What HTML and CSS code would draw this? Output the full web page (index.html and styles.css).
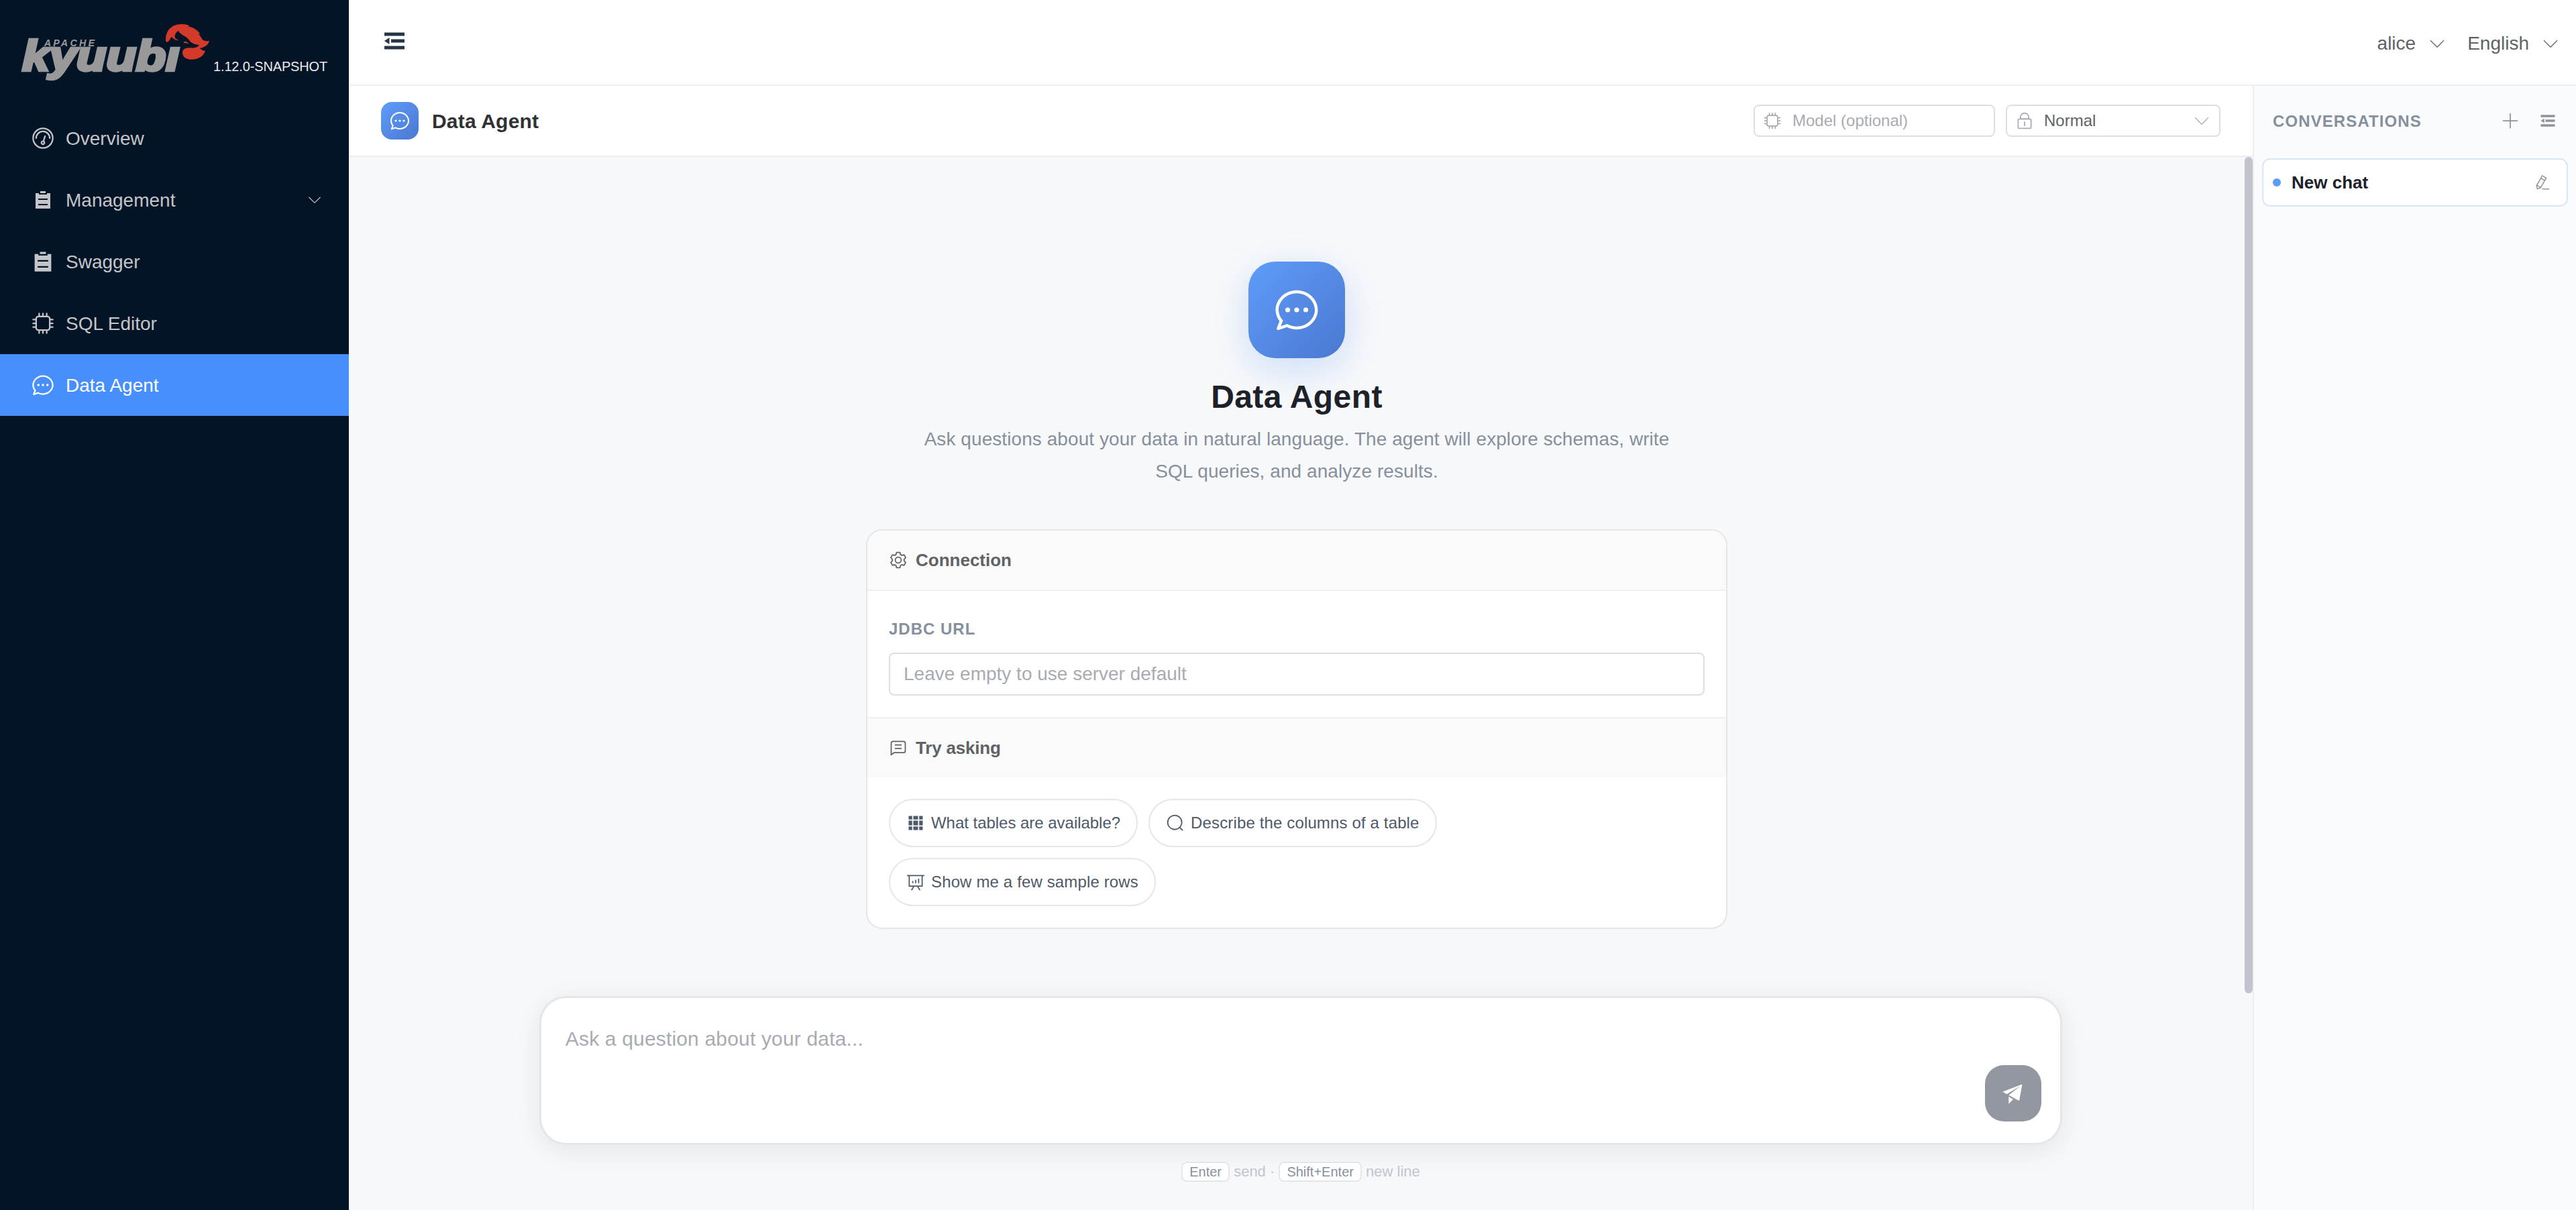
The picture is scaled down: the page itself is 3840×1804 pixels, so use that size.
FILE: index.html
```html
<!DOCTYPE html>
<html lang="en">
<head>
    <meta charset="UTF-8">
    <meta name="viewport" content="width=device-width, initial-scale=1.0">
    <title>Apache Kyuubi Dashboard</title>

    <link rel="stylesheet" href="styles.css">
</head>
<body>

    <!-- shared icons -->
    <svg class="sprite" xmlns="http://www.w3.org/2000/svg">
        <symbol id="i-odometer" viewBox="0 0 1024 1024">
            <path d="M512 896a384 384 0 1 0 0-768 384 384 0 0 0 0 768m0 64a448 448 0 1 1 0-896 448 448 0 0 1 0 896"/>
            <path d="M192 512a320 320 0 1 1 640 0 32 32 0 1 1-64 0 256 256 0 1 0-512 0 32 32 0 0 1-64 0"/>
            <path d="M570.432 627.84A96 96 0 1 1 509.568 608l60.992-187.776A32 32 0 1 1 631.424 440l-60.992 187.776zM502.08 734.464a32 32 0 1 0 19.84-60.928 32 32 0 0 0-19.84 60.928"/>
        </symbol>
        <symbol id="i-list" viewBox="0 0 1024 1024">
            <path d="M704 192h160v736H160V192h160v64h384zM288 512h448v-64H288zm0 256h448v-64H288zm96-576V96h256v96z"/>
        </symbol>
        <symbol id="i-cpu" viewBox="0 0 1024 1024">
            <path d="M320 256a64 64 0 0 0-64 64v384a64 64 0 0 0 64 64h384a64 64 0 0 0 64-64V320a64 64 0 0 0-64-64zm0-64h384a128 128 0 0 1 128 128v384a128 128 0 0 1-128 128H320a128 128 0 0 1-128-128V320a128 128 0 0 1 128-128"/>
            <path d="M480 224V96a32 32 0 0 1 64 0v128zM640 224V96a32 32 0 0 1 64 0v128zM320 224V96a32 32 0 0 1 64 0v128zM480 800v128a32 32 0 0 0 64 0V800zM640 800v128a32 32 0 0 0 64 0V800zM320 800v128a32 32 0 0 0 64 0V800zM224 480H96a32 32 0 0 0 0 64h128zM224 640H96a32 32 0 0 0 0 64h128zM224 320H96a32 32 0 0 0 0 64h128zM800 480h128a32 32 0 0 1 0 64H800zM800 640h128a32 32 0 0 1 0 64H800zM800 320h128a32 32 0 0 1 0 64H800z"/>
        </symbol>
        <symbol id="i-chat" viewBox="0 0 1024 1024">
            <path d="m174.72 855.68 135.296-45.12 23.68 11.84C388.096 849.536 448.576 864 512 864c211.84 0 384-166.784 384-352S723.84 160 512 160 128 326.784 128 512c0 69.12 24.96 139.264 70.848 199.232l22.08 28.8-46.272 115.584zm-45.248 82.56A32 32 0 0 1 89.6 896l58.368-145.92C94.72 680.32 64 596.864 64 512 64 299.904 256 96 512 96s448 203.904 448 416-192 416-448 416a461.056 461.056 0 0 1-206.912-48.384l-175.616 58.56z"/>
            <path d="M512 563.2a51.2 51.2 0 1 1 0-102.4 51.2 51.2 0 0 1 0 102.4m192 0a51.2 51.2 0 1 1 0-102.4 51.2 51.2 0 0 1 0 102.4m-384 0a51.2 51.2 0 1 1 0-102.4 51.2 51.2 0 0 1 0 102.4"/>
        </symbol>
        <symbol id="i-arrow" viewBox="0 0 1024 1024">
            <path d="M160 352 512 700 864 352" fill="none" stroke="currentColor" stroke-width="50" stroke-linecap="round" stroke-linejoin="round"/>
        </symbol>
        <symbol id="i-fold" viewBox="0 0 1024 1024">
            <path d="M896 192H128v128h768zm0 256H384v128h512zm0 256H128v128h768zM320 384 128 512l192 128z"/>
        </symbol>
        <symbol id="i-lock" viewBox="0 0 1024 1024">
            <path d="M224 448a32 32 0 0 0-32 32v384a32 32 0 0 0 32 32h576a32 32 0 0 0 32-32V480a32 32 0 0 0-32-32zm0-64h576a96 96 0 0 1 96 96v384a96 96 0 0 1-96 96H224a96 96 0 0 1-96-96V480a96 96 0 0 1 96-96"/>
            <path d="M512 544a32 32 0 0 1 32 32v192a32 32 0 1 1-64 0V576a32 32 0 0 1 32-32m192-160v-64a192 192 0 1 0-384 0v64zM512 64a256 256 0 0 1 256 256v128H256V320A256 256 0 0 1 512 64"/>
        </symbol>
        <symbol id="i-plus" viewBox="0 0 1024 1024">
            <path d="M480 480V128a32 32 0 0 1 64 0v352h352a32 32 0 1 1 0 64H544v352a32 32 0 1 1-64 0V544H128a32 32 0 0 1 0-64z"/>
        </symbol>
        <symbol id="i-edit" viewBox="0 0 1024 1024">
            <path d="m199.04 672.64 193.984 112 224-387.968-193.92-112-224 388.032zm-23.872 60.16 32.896 148.288 144.896-45.696zM455.04 229.248l193.92 112 56.704-98.112-193.984-112zM104.32 708.8l384-665.024 304.768 175.936L409.152 884.8h.064l-248.448 78.336zm384 254.272v-64h448v64z"/>
        </symbol>
        <symbol id="i-setting" viewBox="0 0 1024 1024">
            <path d="M600.704 64a32 32 0 0 1 30.464 22.208l35.2 109.376c14.784 7.232 28.928 15.36 42.432 24.512l112.384-24.192a32 32 0 0 1 34.432 15.36L944.32 364.8a32 32 0 0 1-4.032 37.504l-77.12 85.12a357.12 357.12 0 0 1 0 49.024l77.12 85.248a32 32 0 0 1 4.032 37.504l-88.704 153.6a32 32 0 0 1-34.432 15.296L708.8 803.904c-13.44 9.088-27.648 17.28-42.368 24.512l-35.264 109.376A32 32 0 0 1 600.704 960H423.296a32 32 0 0 1-30.464-22.208L357.696 828.48a351.616 351.616 0 0 1-42.56-24.64l-112.32 24.256a32 32 0 0 1-34.432-15.36L79.68 659.2a32 32 0 0 1 4.032-37.504l77.12-85.248a357.12 357.12 0 0 1 0-48.896l-77.12-85.248A32 32 0 0 1 79.68 364.8l88.704-153.6a32 32 0 0 1 34.432-15.296l112.32 24.256c13.568-9.152 27.776-17.408 42.56-24.64l35.2-109.312A32 32 0 0 1 423.232 64H600.64zm-23.424 64H446.72l-36.352 113.088-24.512 11.968a294.113 294.113 0 0 0-34.816 20.096l-22.656 15.36-116.224-25.088-65.28 113.152 79.68 88.192-1.92 27.136a293.12 293.12 0 0 0 0 40.192l1.92 27.136-79.808 88.192 65.344 113.152 116.224-25.024 22.656 15.296a294.113 294.113 0 0 0 34.816 20.096l24.512 11.968L446.72 896h130.688l36.48-113.152 24.448-11.904a288.282 288.282 0 0 0 34.752-20.096l22.592-15.296 116.288 25.024 65.28-113.152-79.744-88.192 1.92-27.136a293.12 293.12 0 0 0 0-40.256l-1.92-27.136 79.808-88.128-65.344-113.152-116.288 24.96-22.592-15.232a287.616 287.616 0 0 0-34.752-20.096l-24.448-11.904L577.344 128zM512 320a192 192 0 1 1 0 384 192 192 0 0 1 0-384m0 64a128 128 0 1 0 0 256 128 128 0 0 0 0-256"/>
        </symbol>
        <symbol id="i-lines" viewBox="0 0 1024 1024">
            <path d="M160 826.88 273.536 736H800a64 64 0 0 0 64-64V256a64 64 0 0 0-64-64H224a64 64 0 0 0-64 64zM296 800 147.968 918.4A32 32 0 0 1 96 893.44V256a128 128 0 0 1 128-128h576a128 128 0 0 1 128 128v416a128 128 0 0 1-128 128z"/>
            <path d="M352 512h320q32 0 32 32t-32 32H352q-32 0-32-32t32-32m0-192h320q32 0 32 32t-32 32H352q-32 0-32-32t32-32"/>
        </symbol>
        <symbol id="i-grid" viewBox="0 0 1024 1024">
            <path d="M640 384v256H384V384zm64 0h192v256H704zm-64 512H384V704h256zm64 0V704h192v192zm-64-768v192H384V128zm64 0h192v192H704zM320 384v256H128V384zm0 512H128V704h192zm0-768v192H128V128z"/>
        </symbol>
        <symbol id="i-search" viewBox="0 0 1024 1024">
            <path d="m795.904 750.72 124.992 124.928a32 32 0 0 1-45.248 45.248L750.656 795.904a416 416 0 1 1 45.248-45.248zM480 832a352 352 0 1 0 0-704 352 352 0 0 0 0 704"/>
        </symbol>
        <symbol id="i-analysis" viewBox="0 0 1024 1024">
            <path d="m665.216 768 110.848 192h-73.856L591.36 768H433.024L322.176 960H248.32l110.848-192H160a32 32 0 0 1-32-32V192H64a32 32 0 0 1 0-64h896a32 32 0 1 1 0 64h-64v544a32 32 0 0 1-32 32zM832 192H192v512h640zM352 448a32 32 0 0 1 32 32v64a32 32 0 0 1-64 0v-64a32 32 0 0 1 32-32m160-64a32 32 0 0 1 32 32v128a32 32 0 0 1-64 0V416a32 32 0 0 1 32-32m160-64a32 32 0 0 1 32 32v192a32 32 0 1 1-64 0V352a32 32 0 0 1 32-32"/>
        </symbol>
        <symbol id="i-send" viewBox="0 0 1024 1024">
            <path d="m64 448 832-320-128 704-446.08-243.328L832 192 242.816 545.472zm256 512V657.024L512 768z"/>
        </symbol>
    </svg>

    <aside class="sidebar">
        <div class="brand">
            <svg class="logo" viewBox="0 0 930 330">
                <text class="logo-name" x="40" y="242" textLength="702" lengthAdjust="spacingAndGlyphs">kyuubı</text>
                <text class="logo-apache" x="137" y="134" textLength="226">APACHE</text>
                <path class="logo-fox" d="M682 115C676 66 708 35 755 36C770 36 780 39 788 43L779 46C803 50 824 62 836 82L826 77C838 90 843 104 851 109C860 113 868 112 876 110C872 130 856 139 833 144C842 151 850 156 858 155C851 180 825 195 795 194C765 193 752 176 757 156C761 143 785 140 802 143C816 141 828 136 831 129C812 128 793 121 784 105C772 88 745 84 738 65C722 75 719 91 724 99L738 108C725 109 715 102 706 92C699 106 693 119 682 115Z"/>
                <path class="logo-fox" d="M761 115C770 112 782 115 784 127C778 120 770 121 763 121Z"/>
            </svg>
            <span class="version">1.12.0-SNAPSHOT</span>
        </div>
        <nav class="menu">
            <a class="menu-item"><svg class="icon"><use href="#i-odometer"/></svg><span>Overview</span></a>
            <a class="menu-item"><svg class="icon icon-small"><use href="#i-list"/></svg><span>Management</span><svg class="icon menu-arrow"><use href="#i-arrow"/></svg></a>
            <a class="menu-item"><svg class="icon"><use href="#i-list"/></svg><span>Swagger</span></a>
            <a class="menu-item"><svg class="icon"><use href="#i-cpu"/></svg><span>SQL Editor</span></a>
            <a class="menu-item active"><svg class="icon"><use href="#i-chat"/></svg><span>Data Agent</span></a>
        </nav>
    </aside>

    <div class="container">
        <header class="header">
            <svg class="icon fold"><use href="#i-fold"/></svg>
            <div class="header-right">
                <span class="dropdown">alice<svg class="icon"><use href="#i-arrow"/></svg></span>
                <span class="dropdown">English<svg class="icon"><use href="#i-arrow"/></svg></span>
            </div>
        </header>

        <div class="page">
            <main class="agent">
                <div class="toolbar">
                    <div class="badge"><svg class="icon"><use href="#i-chat"/></svg></div>
                    <h1>Data Agent</h1>
                    <label class="control model">
                        <svg class="icon"><use href="#i-cpu"/></svg>
                        <input type="text" placeholder="Model (optional)">
                    </label>
                    <div class="control mode">
                        <svg class="icon"><use href="#i-lock"/></svg>
                        <span>Normal</span>
                        <svg class="icon"><use href="#i-arrow"/></svg>
                    </div>
                </div>

                <div class="messages">
                    <div class="welcome">
                        <div class="welcome-icon"><svg class="icon"><use href="#i-chat"/></svg></div>
                        <h2>Data Agent</h2>
                        <p>Ask questions about your data in natural language. The agent will explore schemas, write SQL queries, and analyze results.</p>

                        <div class="card">
                            <div class="card-header"><svg class="icon"><use href="#i-setting"/></svg>Connection</div>
                            <div class="card-form">
                                <label for="jdbcUrl">JDBC URL</label>
                                <input type="text" id="jdbcUrl" placeholder="Leave empty to use server default">
                            </div>
                            <div class="card-header second"><svg class="icon"><use href="#i-lines"/></svg>Try asking</div>
                            <div class="prompts">
                                <button type="button"><svg class="icon"><use href="#i-grid"/></svg>What tables are available?</button>
                                <button type="button"><svg class="icon"><use href="#i-search"/></svg>Describe the columns of a table</button>
                                <button type="button"><svg class="icon"><use href="#i-analysis"/></svg>Show me a few sample rows</button>
                            </div>
                        </div>
                    </div>
                    <div class="scrollbar"></div>
                </div>

                <div class="footer">
                    <div class="composer">
                        <textarea placeholder="Ask a question about your data..."></textarea>
                        <button type="button" class="send"><svg class="icon"><use href="#i-send"/></svg></button>
                    </div>
                    <div class="hint"><kbd>Enter</kbd> send · <kbd>Shift+Enter</kbd> new line</div>
                </div>
            </main>

            <aside class="conversations">
                <div class="conversations-header">
                    <span>CONVERSATIONS</span>
                    <svg class="icon"><use href="#i-plus"/></svg>
                    <svg class="icon"><use href="#i-fold"/></svg>
                </div>
                <div class="conversation">
                    <i class="dot"></i>
                    <span>New chat</span>
                    <svg class="icon"><use href="#i-edit"/></svg>
                </div>
            </aside>
        </div>
    </div>

</body>
</html>
```

FILE: styles.css
```css
* {
    box-sizing: border-box;
}

body {
    margin: 0;
    display: flex;
    height: 100vh;
    overflow: hidden;
    font-family: "Liberation Sans", Arial, sans-serif;
    font-size: 28px;
    color: #606266;
    background-color: #f7f8fa;
}

h1, h2, p {
    margin: 0;
}

input, textarea, button {
    font-family: inherit;
    margin: 0;
    outline: none;
}

input::placeholder, textarea::placeholder {
    color: #a8abb2;
    opacity: 1;
}

.sprite {
    display: none;
}

.icon {
    width: 28px;
    height: 28px;
    fill: currentColor;
    flex-shrink: 0;
}

/* sidebar */
.sidebar {
    width: 520px;
    flex-shrink: 0;
    background-color: #041427;
}

.brand {
    display: flex;
    align-items: flex-start;
    height: 160px;
    padding: 24px 0 0 20px;
}

.logo {
    width: 310px;
    height: 110px;
    flex-shrink: 0;
}

.logo-name {
    font-size: 189px;
    font-weight: bold;
    font-style: italic;
    fill: #999;
    stroke: #999;
    stroke-width: 13px;
}

.logo-apache {
    font-size: 43px;
    font-weight: bold;
    font-style: italic;
    fill: #999;
}

.logo-fox {
    fill: #d43a2a;
}

.version {
    margin: 63px 0 0 -12px;
    font-size: 20px;
    line-height: 24px;
    letter-spacing: -0.15px;
    color: #e8eaed;
    white-space: nowrap;
}

.menu-item {
    display: flex;
    align-items: center;
    gap: 16px;
    height: 92px;
    padding: 0 39px 0 46px;
    color: #c3c5c9;
}

.menu-item span {
    padding-top: 2px;
}

.menu-item .icon {
    width: 36px;
    height: 36px;
}

.menu-item .icon-small {
    width: 32px;
    height: 32px;
    margin: 0 2px;
}

.menu-item .menu-arrow {
    width: 24px;
    height: 24px;
    margin-left: auto;
}

.menu-item.active {
    color: #fff;
    background-color: #468ffc;
}

/* top header */
.container {
    flex: 1;
    min-width: 0;
    display: flex;
    flex-direction: column;
}

.header {
    display: flex;
    align-items: center;
    justify-content: space-between;
    height: 128px;
    padding: 0 24px 0 48px;
    background-color: #fff;
    border-bottom: 2px solid #eeeff0;
}

.fold {
    width: 40px;
    height: 40px;
    margin-bottom: 4px;
    color: #263445;
}

.header-right {
    display: flex;
    gap: 31px;
    margin-top: 4px;
}

.dropdown {
    display: flex;
    align-items: center;
    gap: 18px;
}

.page {
    flex: 1;
    min-height: 0;
    display: flex;
}

.agent {
    flex: 1;
    min-width: 0;
    display: flex;
    flex-direction: column;
}

/* toolbar */
.toolbar {
    display: flex;
    align-items: center;
    height: 106px;
    padding: 0 48px;
    background-color: #fff;
    border-bottom: 2px solid #ebeef3;
}

.badge {
    display: flex;
    align-items: center;
    justify-content: center;
    width: 56px;
    height: 56px;
    border-radius: 16px;
    color: #fff;
    background: linear-gradient(135deg, #5e9cfa, #4b78d0);
}

.badge .icon {
    width: 32px;
    height: 32px;
}

.toolbar h1 {
    flex: 1;
    margin-left: 20px;
    padding-top: 2px;
    font-size: 30px;
    letter-spacing: 0.2px;
    color: #303133;
}

.control {
    display: flex;
    align-items: center;
    gap: 16px;
    height: 48px;
    padding: 0 12px;
    font-size: 24px;
    background-color: #fff;
    border: 2px solid #dcdfe6;
    border-radius: 8px;
}

.control .icon {
    color: #a8abb2;
}

.control input {
    flex: 1;
    min-width: 0;
    padding: 0;
    font-size: 24px;
    border: none;
}

.model {
    width: 360px;
    margin-right: 16px;
}

.mode {
    width: 320px;
    gap: 15px;
}

.mode span {
    flex: 1;
}

/* welcome */
.messages {
    display: flex;
    height: 1247px;
}

.welcome {
    flex: 1;
    display: flex;
    flex-direction: column;
    align-items: center;
    padding-top: 156px;
}

.welcome-icon {
    display: flex;
    align-items: center;
    justify-content: center;
    width: 144px;
    height: 144px;
    border-radius: 40px;
    color: #fff;
    background: linear-gradient(135deg, #5e9cfa, #4b78d0);
    box-shadow: 0 16px 56px rgba(91, 155, 250, 0.28);
}

.welcome-icon .icon {
    width: 72px;
    height: 72px;
}

.welcome h2 {
    margin-top: 30px;
    font-size: 48px;
    line-height: 56px;
    letter-spacing: 0.4px;
    color: #1d2129;
}

.welcome p {
    max-width: 1160px;
    margin: 11px 0 62px;
    line-height: 48px;
    letter-spacing: 0.07px;
    text-align: center;
    color: #86909c;
}

.card {
    width: 1284px;
    overflow: hidden;
    background-color: #fff;
    border: 2px solid #e5e6eb;
    border-radius: 24px;
}

.card-header {
    display: flex;
    align-items: center;
    gap: 12px;
    height: 90px;
    padding: 0 32px;
    font-size: 26px;
    font-weight: bold;
    background-color: #fafafa;
    border-bottom: 2px solid #f0f0f0;
}

.card-header.second {
    letter-spacing: -0.2px;
    border-bottom: none;
    border-top: 2px solid #f0f0f0;
}

.card-form {
    padding: 43px 32px 32px;
}

.card-form label {
    display: block;
    margin-bottom: 21px;
    font-size: 24px;
    font-weight: bold;
    line-height: 28px;
    letter-spacing: 1px;
    color: #86909c;
}

.card-form input {
    display: block;
    width: 100%;
    height: 64px;
    padding: 0 20px;
    font-size: 28px;
    border: 2px solid #dcdfe6;
    border-radius: 8px;
}

.prompts {
    display: flex;
    flex-wrap: wrap;
    gap: 16px;
    padding: 32px;
    padding-right: 200px;
}

.prompts button {
    display: flex;
    align-items: center;
    gap: 9px;
    height: 72px;
    padding: 0 24px;
    font-size: 24px;
    letter-spacing: 0.14px;
    color: #4e5969;
    background-color: #fff;
    border: 2px solid #e5e6eb;
    border-radius: 36px;
}

.prompts button:first-child {
    letter-spacing: -0.03px;
}

.scrollbar {
    width: 12px;
    border-radius: 6px;
    background-color: #c1c4cd;
}

/* composer */
.footer {
    padding-top: 4px;
}

.composer {
    display: flex;
    align-items: flex-end;
    width: 80%;
    height: 222px;
    margin: 0 auto;
    padding: 38px 28px 32px 36px;
    background-color: #fff;
    border: 3px solid #e5e6eb;
    border-radius: 40px;
    box-shadow: 0 8px 40px rgba(0, 0, 0, 0.08);
}

.composer textarea {
    flex: 1;
    align-self: stretch;
    padding: 0;
    font-size: 30px;
    line-height: 45px;
    letter-spacing: 0.17px;
    border: none;
    resize: none;
}

.send {
    display: flex;
    align-items: center;
    justify-content: center;
    width: 84px;
    height: 84px;
    padding: 0;
    border: none;
    border-radius: 28px;
    color: #fff;
    background-color: #9297a0;
}

.send .icon {
    width: 36px;
    height: 36px;
}

.hint {
    margin-top: 24px;
    font-size: 22px;
    line-height: 32px;
    text-align: center;
    color: #c2c5cf;
}

.hint kbd {
    padding: 2px 10px;
    font-family: inherit;
    font-size: 20px;
    color: #86909c;
    background-color: #fff;
    border: 2px solid #e5e6eb;
    border-radius: 8px;
}

/* conversations */
.conversations {
    width: 482px;
    flex-shrink: 0;
    padding: 0 12px;
    background-color: #fafbfd;
    border-left: 2px solid #ebeef3;
}

.conversations-header {
    display: flex;
    align-items: center;
    gap: 28px;
    height: 104px;
    margin-bottom: 4px;
    padding: 0 16px;
    color: #909399;
}

.conversations-header span {
    flex: 1;
    padding-top: 2px;
    font-size: 24px;
    font-weight: bold;
    letter-spacing: 1.1px;
    color: #86909c;
}

.conversation {
    display: flex;
    align-items: center;
    height: 72px;
    padding: 0 24px 0 14px;
    font-size: 26px;
    font-weight: bold;
    color: #1d2129;
    background-color: #fff;
    border: 2px solid #d9e6f7;
    border-radius: 12px;
}

.conversation span {
    flex: 1;
    margin-left: 16px;
}

.conversation .icon {
    width: 24px;
    height: 24px;
    color: #909399;
}

.dot {
    width: 12px;
    height: 12px;
    border-radius: 50%;
    background-color: #5e9cfa;
}
```
